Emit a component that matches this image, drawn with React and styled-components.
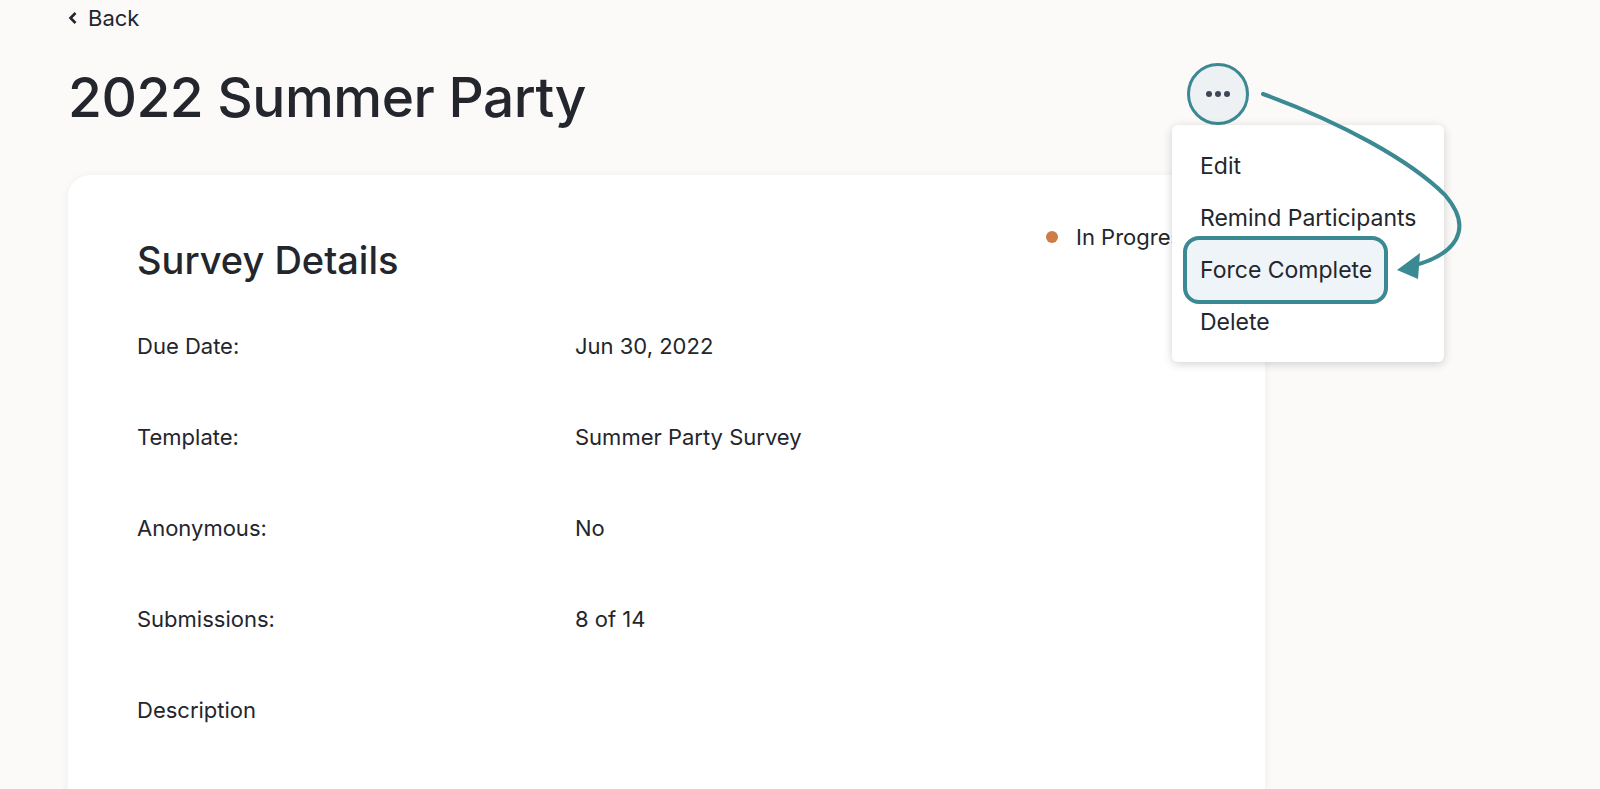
import styled, { createGlobalStyle } from "styled-components";

const GlobalStyle = createGlobalStyle`
  html, body {
    margin: 0;
    padding: 0;
    background: #fbfaf9;
    color: #23262d;
    font-family: "Inter", "Noto Sans", sans-serif;
    overflow: hidden;
  }
`;

const Page = styled.div`
  position: relative;
  width: 1600px;
  height: 789px;
  padding-left: 68px;
  box-sizing: border-box;
`;

const BackLink = styled.a`
  display: inline-flex;
  align-items: center;
  gap: 10px;
  margin-top: 5px;
  font-size: 22px;
  color: #23262d;
  text-decoration: none;
  cursor: pointer;
`;

const Header = styled.div`
  position: relative;
  width: 1197px;
  display: flex;
  align-items: flex-start;
  justify-content: space-between;
  margin-top: 28px;
  padding-right: 16px;
  box-sizing: border-box;
`;

const Title = styled.h1`
  margin: 6px 0 0;
  font-size: 55px;
  font-weight: 500;
  letter-spacing: -0.5px;
  line-height: 64px;
`;

const MoreButton = styled.button`
  width: 62px;
  height: 62px;
  margin-top: 4px;
  border-radius: 50%;
  border: 3px solid #3b8a93;
  background: #edf1f3;
  display: flex;
  align-items: center;
  justify-content: center;
  gap: 3px;
  padding: 0;
  cursor: pointer;
`;

const Dot = styled.span`
  width: 6px;
  height: 6px;
  border-radius: 50%;
  background: #3f4756;
`;

const Menu = styled.div`
  position: absolute;
  top: 66px;
  right: -179px;
  width: 272px;
  padding: 15px 0 14px;
  background: #fff;
  border-radius: 6px;
  box-shadow: 0 2px 10px rgba(0, 0, 0, 0.18);
  display: flex;
  flex-direction: column;
  z-index: 2;
`;

const MenuItem = styled.div`
  font-size: 23px;
  line-height: 52px;
  padding-left: 28px;
  color: #23262d;
  white-space: nowrap;
  ${(p) =>
    p.$active &&
    `
    margin: -8px 56px -8px 11px;
    padding-left: 13px;
    line-height: 60px;
    border: 4px solid #3b8a93;
    border-radius: 16px;
    background: #eef4f7;
  `}
`;

const Card = styled.section`
  position: relative;
  width: 1197px;
  height: 700px;
  margin-top: 46px;
  padding: 62px 69px 0;
  box-sizing: border-box;
  background: #fff;
  border-radius: 22px;
  box-shadow: 0 1px 8px rgba(60, 50, 40, 0.06);
`;

const Status = styled.div`
  position: absolute;
  top: 49px;
  left: 978px;
  display: flex;
  align-items: center;
  gap: 18px;
  font-size: 22px;
  white-space: nowrap;
`;

const StatusDot = styled.span`
  width: 12px;
  height: 12px;
  border-radius: 50%;
  background: #cd7d46;
`;

const SectionTitle = styled.h2`
  margin: 0 0 17px;
  font-size: 38px;
  font-weight: 500;
  line-height: 46px;
`;

const Details = styled.div`
  display: grid;
  grid-template-columns: 438px 1fr;
  grid-auto-rows: 91px;
  align-items: center;
  font-size: 22px;
`;

const Label = styled.div``;
const Value = styled.div``;

const Annotation = styled.svg`
  position: absolute;
  left: 0;
  top: 0;
  pointer-events: none;
  z-index: 3;
`;

const rows = [
  ["Due Date:", "Jun 30, 2022"],
  ["Template:", "Summer Party Survey"],
  ["Anonymous:", "No"],
  ["Submissions:", "8 of 14"],
  ["Description", ""],
];

export default function App() {
  return (
    <>
      <GlobalStyle />
      <Page>
        <BackLink>
          <svg width="10" height="14" viewBox="0 0 10 14">
            <path d="M7.5 2 L2.5 7 L7.5 12" fill="none" stroke="#23262d" strokeWidth="2.6" />
          </svg>
          Back
        </BackLink>

        <Header>
          <Title>2022 Summer Party</Title>
          <MoreButton aria-label="More actions">
            <Dot />
            <Dot />
            <Dot />
          </MoreButton>
          <Menu>
            <MenuItem>Edit</MenuItem>
            <MenuItem>Remind Participants</MenuItem>
            <MenuItem $active>Force Complete</MenuItem>
            <MenuItem>Delete</MenuItem>
          </Menu>
        </Header>

        <Card>
          <Status>
            <StatusDot />
            In Progress
          </Status>
          <SectionTitle>Survey Details</SectionTitle>
          <Details>
            {rows.map(([label, value]) => [
              <Label key={label}>{label}</Label>,
              <Value key={label + "-v"}>{value}</Value>,
            ])}
          </Details>
        </Card>

        {/* callout arrow from the menu button to the highlighted action */}
        <Annotation width="1600" height="789">
          <path
            d="M1263 94 C1340 122 1410 160 1445 195 C1475 230 1455 255 1412 266"
            fill="none"
            stroke="#3b8a93"
            strokeWidth="4"
            strokeLinecap="round"
          />
          <path d="M1397 270 L1420 253 L1418 279 Z" fill="#3b8a93" />
        </Annotation>
      </Page>
    </>
  );
}
